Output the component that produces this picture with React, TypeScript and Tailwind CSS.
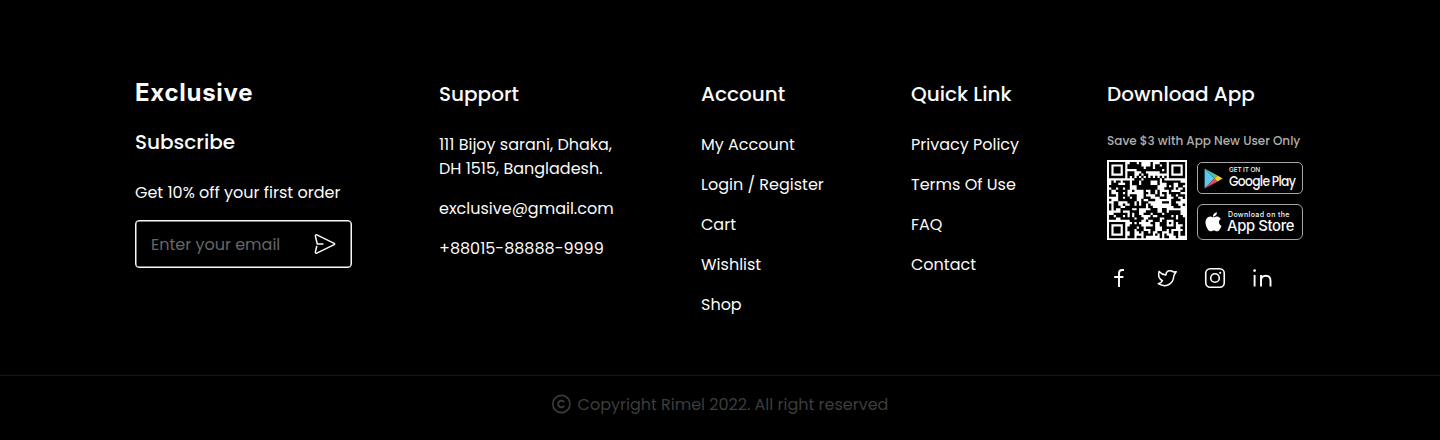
import type { ReactNode } from "react";

const account = ["My Account", "Login / Register", "Cart", "Wishlist", "Shop"];
const quickLinks = ["Privacy Policy", "Terms Of Use", "FAQ", "Contact"];

const QR_SIZE = 33;

function finder(x: number, y: number): boolean | null {
  const corners = [[0, 0], [QR_SIZE - 7, 0], [0, QR_SIZE - 7]];
  for (const [cx, cy] of corners) {
    const d = Math.max(Math.abs(x - cx - 3), Math.abs(y - cy - 3));
    if (d <= 4) return d === 3 || d <= 1;
  }
  const a = Math.max(Math.abs(x - 26), Math.abs(y - 26));
  if (a <= 2) return a !== 1;
  if (x === 6 || y === 6) return (x + y) % 2 === 0;
  return null;
}

// Placeholder module pattern: the locator marks are real, the data area is seeded noise.
function qrPath(): string {
  let seed = 20227;
  let d = "";
  let above: boolean[] = [];
  for (let y = 0; y < QR_SIZE; y++) {
    const row: boolean[] = [];
    for (let x = 0; x < QR_SIZE; x++) {
      seed = (seed * 48271) % 2147483647;
      const bias = (row[x - 1] ? 0.18 : 0) + (above[x] ? 0.18 : 0);
      const dark = finder(x, y) ?? seed / 2147483647 < 0.36 + bias;
      row.push(dark);
      if (dark) d += `M${x} ${y}h1.05v1.05h-1.05z`;
    }
    above = row;
  }
  return d;
}

function QrCode() {
  return (
    <svg className="size-20 bg-white" viewBox="-0.86 -0.86 34.72 34.72">
      <path d={qrPath()} fill="#000" />
    </svg>
  );
}

function Column({ title, children }: { title: string; children: ReactNode }) {
  return (
    <section className="flex shrink-0 flex-col gap-6">
      <h2 className="text-xl leading-7 font-medium">{title}</h2>
      {children}
    </section>
  );
}

function Links({ items }: { items: string[] }) {
  return (
    <ul className="flex flex-col gap-4 pt-px">
      {items.map((item) => (
        <li key={item}>{item}</li>
      ))}
    </ul>
  );
}

function SendIcon() {
  return (
    <svg className="size-6" viewBox="0 0 24 24" fill="none" stroke="#fafafa" strokeWidth="1.5" strokeLinecap="round" strokeLinejoin="round">
      <path d="M9.9 12H4.3L2.4 4.3c-.3-1.1.6-1.9 1.5-1.45l17.3 8.5c.55.27.55 1.03 0 1.3l-17.3 8.5c-.9.45-1.8-.35-1.5-1.45l1.3-5.2" />
    </svg>
  );
}

function GooglePlay() {
  return (
    <div className="flex h-8 w-[106px] items-center rounded-[5px] border border-[#a6a6a6] pl-[6px]">
      <svg className="h-[21px] w-[19px] shrink-0" viewBox="0 0 19 21">
        <path d="M.6.5v20L10.4 10.5z" fill="#5bc8f2" />
        <path d="M.6.5 13.6 7.5 10.4 10.5z" fill="#4fc3a1" />
        <path d="M.6 20.5l13-7-3.2-3z" fill="#eb4a5a" />
        <path d="m13.6 7.5 5 3-5 3-3.2-3z" fill="#f9cf1e" />
      </svg>
      <div className="flex flex-col pl-[6px]">
        <span className="h-[7px] text-[6.4px] leading-[6px] font-medium font-['Inter',sans-serif] tracking-[-0.1px] whitespace-nowrap">GET IT ON</span>
        <span className="h-[15px] origin-left scale-x-[0.92] text-[13.4px] leading-[16px] font-medium tracking-[-0.75px] whitespace-nowrap">Google Play</span>
      </div>
    </div>
  );
}

function AppStore() {
  return (
    <div className="flex h-9 w-[106px] items-center rounded-[6px] border border-[#a6a6a6] pl-[7px]">
      <svg className="h-[20px] w-[17px] shrink-0" viewBox="0 0 17 20" fill="#fff">
        <path d="M11.9.2c.15 1.2-.35 2.3-1.05 3.15C10.1 4.2 9 4.8 7.95 4.7 7.8 3.6 8.4 2.4 9 1.7 9.75.9 10.95.25 11.9.2zM15.9 6.9c-1.2.75-1.95 1.9-1.9 3.4 0 1.75 1.1 3.1 2.5 3.6-.35 1.05-.85 2.05-1.5 3-.8 1.2-1.65 2.4-2.95 2.4-1.3.05-1.7-.75-3.2-.75s-1.95.75-3.15.8c-1.3.05-2.25-1.25-3.1-2.45C.9 14.4-.45 9.95 1.3 6.95 2.15 5.45 3.65 4.5 5.3 4.5c1.25-.05 2.4.85 3.2.85.75 0 2.15-1.05 3.6-.9.6.05 2.5.25 3.8 2.45z" />
      </svg>
      <div className="flex flex-col pl-[5px] font-['Inter',sans-serif]">
        <span className="h-[8px] pl-px text-[7px] leading-[10px] font-medium tracking-[0.35px] whitespace-nowrap">Download on the</span>
        <span className="h-[16px] text-[14.8px] leading-[17px] font-medium tracking-[-0.35px] whitespace-nowrap">App Store</span>
      </div>
    </div>
  );
}

function Socials() {
  return (
    <div className="mt-6 flex gap-6">
      <svg className="size-6" viewBox="0 0 24 24" fill="none" stroke="#fff" strokeWidth="1.9">
        <path d="M17 4h-1.7C13.1 4 12 5.3 12 7.2V21M7.2 11h9.2" />
      </svg>
      <svg className="size-6" viewBox="0 0 24 24" fill="none" stroke="#fff" strokeWidth="1.5" strokeLinejoin="round" strokeLinecap="round">
        <path d="M14.6 4.75c-2.1 0-3.75 1.7-3.7 4.3-2.7-.2-4.7-1.3-6.8-3.65-1.15 3.4-.4 7.1 3.4 9.35-.7 1.55-2.1 2.45-4.2 2.95 6.9 4.3 15 1 15.5-7.7.1-1.1.6-1.7 2.4-4.3l-2.5.35C17.8 5.3 16.2 4.75 14.6 4.75z" />
      </svg>
      <svg className="size-6" viewBox="0 0 24 24" fill="none" stroke="#fff" strokeWidth="1.6">
        <rect x="2.75" y="2.75" width="18.5" height="18.5" rx="4.5" />
        <circle cx="12" cy="12" r="4.3" />
        <circle cx="17.2" cy="6.8" r="1.1" fill="#fff" stroke="none" />
      </svg>
      <svg className="size-6" viewBox="0 0 24 24" fill="none" stroke="#fff" strokeWidth="1.9">
        <path d="M3.6 9v11.5M10 9v11.5M10 14.8C10 11.6 11.7 9.7 14.8 9.7s4.7 1.9 4.7 5.1v5.7" />
        <circle cx="3.6" cy="4.6" r="1.4" fill="#fff" stroke="none" />
      </svg>
    </div>
  );
}

export default function App() {
  return (
    <footer className="flex h-[440px] w-[1440px] flex-col bg-black font-['Poppins','Inter',sans-serif] text-base leading-6 text-[#fafafa]">
      <div className="flex h-[375px] items-start gap-[87px] pt-20 pl-[135px]">
        <section className="flex w-[217px] shrink-0 flex-col">
          <h1 className="pt-px font-['Inter',sans-serif] text-2xl leading-6 font-bold tracking-[0.03em]">Exclusive</h1>
          <h2 className="mt-[23px] text-xl leading-7 font-medium">Subscribe</h2>
          <p className="mt-[25px] whitespace-nowrap">Get 10% off your first order</p>
          <div className="mt-[15px] flex h-12 items-center justify-between rounded border border-[#fafafa] pr-[14px] pl-[15px] shadow-[inset_0_0_0_0.5px_#fafafa]">
            <span className="pt-[2px] text-[#666]">Enter your email</span>
            <SendIcon />
          </div>
        </section>

        <div className="w-[175px] shrink-0">
          <Column title="Support">
            <address className="flex flex-col gap-4 pt-px whitespace-nowrap not-italic">
              <p>111 Bijoy sarani, Dhaka,<br />DH 1515, Bangladesh.</p>
              <p>exclusive@gmail.com</p>
              <p>+88015-88888-9999</p>
            </address>
          </Column>
        </div>

        <div className="w-[123px] shrink-0 whitespace-nowrap">
          <Column title="Account">
            <Links items={account} />
          </Column>
        </div>

        <div className="w-[109px] shrink-0 whitespace-nowrap">
          <Column title="Quick Link">
            <Links items={quickLinks} />
          </Column>
        </div>

        <div className="w-[198px] shrink-0 whitespace-nowrap">
          <Column title="Download App">
            <div className="flex flex-col">
              <p className="text-xs leading-[18px] font-medium text-[#afafaf]">Save $3 with App New User Only</p>
              <div className="mt-2 flex items-center gap-[10px] py-[2px]">
                <QrCode />
                <div className="flex h-20 flex-col justify-between pt-[2px]">
                  <GooglePlay />
                  <AppStore />
                </div>
              </div>
              <Socials />
            </div>
          </Column>
        </div>
      </div>

      <div className="flex justify-center gap-[6px] border-t border-[#161616] pt-4 text-[#3d3d3d]">
        <svg className="mt-[2px] size-5" viewBox="0 0 20 20" fill="none" stroke="currentColor" strokeWidth="1.6">
          <circle cx="9.4" cy="10" r="8.6" />
          <path d="M12.2 8.2A3.3 3.3 0 1 0 12.2 11.8" strokeWidth="1.8" />
        </svg>
        <p className="pt-px">Copyright Rimel 2022. All right reserved</p>
      </div>
    </footer>
  );
}
